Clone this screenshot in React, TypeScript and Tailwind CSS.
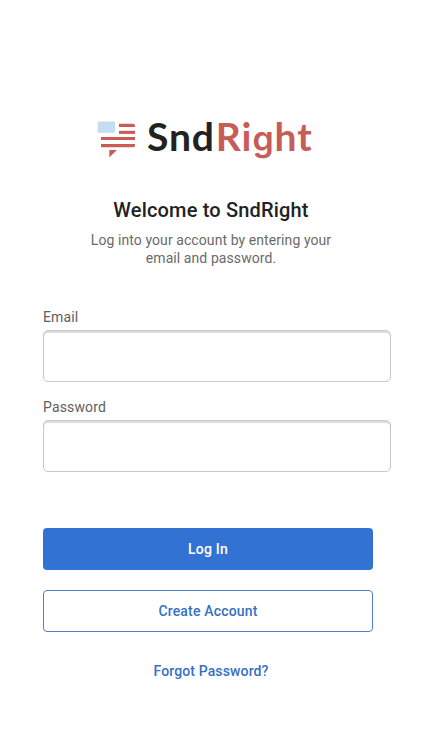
import { useState } from "react";

function Logo() {
  return (
    <div className="flex h-[40px] pl-[97px]">
      <svg
        className="mt-[3px] shrink-0"
        width="39"
        height="38"
        viewBox="0 0 39 38"
        fill="#c85c57"
      >
        <rect x="0.7" y="0.5" width="17.4" height="11.3" rx="0.8" fill="#c3def0" />
        <path d="M22 2.8h14.2q1.8 0 1.8 1.7v1.5H22z" />
        <path d="M22 9.8h16v3.1H22z" />
        <path d="M4 16h34v3.1H4z" />
        <path d="M4 23h34v1.6q0 1.6-1.7 1.6H4z" />
        <path d="M12.3 29h7.6l-7.6 7.6z" />
      </svg>
      <span className="ml-[11px] h-[40px] font-['Lato',sans-serif] text-[39px] leading-[36px] font-bold tracking-[0.9px] whitespace-nowrap text-[#222]">
        Snd
        <span className="ml-[1px] text-[#c85c57]">
          Ri
          <span className="font-['Inter',sans-serif] text-[34px] leading-none font-semibold">
            g
          </span>
          ht
        </span>
      </span>
    </div>
  );
}

function Field({
  label,
  type,
  value,
  onChange,
}: {
  label: string;
  type: string;
  value: string;
  onChange: (value: string) => void;
}) {
  return (
    <label className="flex flex-col">
      <span className="h-[21px] text-[14px] leading-[16px] tracking-[0.15px] text-[#606060]">
        {label}
      </span>
      <input
        type={type}
        value={value}
        onChange={(e) => onChange(e.target.value)}
        className="h-[52px] w-[348px] rounded-[5px] border border-[#c8c8c8] bg-white px-3 shadow-[inset_0_2px_1px_#dcdcdc] outline-none"
      />
    </label>
  );
}

function App() {
  const [email, setEmail] = useState("");
  const [password, setPassword] = useState("");

  return (
    <main className="h-[750px] w-[422px] overflow-hidden bg-white pt-[118px] font-['Roboto',sans-serif]">
      <Logo />

      <div className="mt-[40px] text-center">
        <h1 className="text-[20px] leading-[24px] font-medium tracking-[0.17px] text-[#222]">
          Welcome to SndRight
        </h1>
        <p className="mt-[9px] text-[14px] leading-[18px] tracking-[0.08px] text-[#6a6a6a]">
          Log into your account by entering your
          <br />
          email and password.
        </p>
      </div>

      <form
        className="mt-[42px] px-[43px]"
        onSubmit={(e) => e.preventDefault()}
      >
        <div className="flex flex-col gap-[17px]">
          <Field label="Email" type="email" value={email} onChange={setEmail} />
          <Field
            label="Password"
            type="password"
            value={password}
            onChange={setPassword}
          />
        </div>

        <div className="mt-[56px] flex w-[330px] flex-col gap-[20px]">
          <button
            type="submit"
            className="h-[42px] rounded-[4px] bg-[#3272d3] text-[14px] font-medium tracking-[0.18px] text-white"
          >
            Log In
          </button>
          <button
            type="button"
            className="h-[42px] rounded-[4px] border border-[#4c80c9] bg-white text-[14px] font-medium tracking-[0.18px] text-[#3570c5]"
          >
            Create Account
          </button>
        </div>
      </form>

      <a
        href="#"
        className="mt-[31px] block text-center text-[14px] leading-[16px] font-medium tracking-[0.13px] text-[#3570c5]"
      >
        Forgot Password?
      </a>
    </main>
  );
}

export default App;
